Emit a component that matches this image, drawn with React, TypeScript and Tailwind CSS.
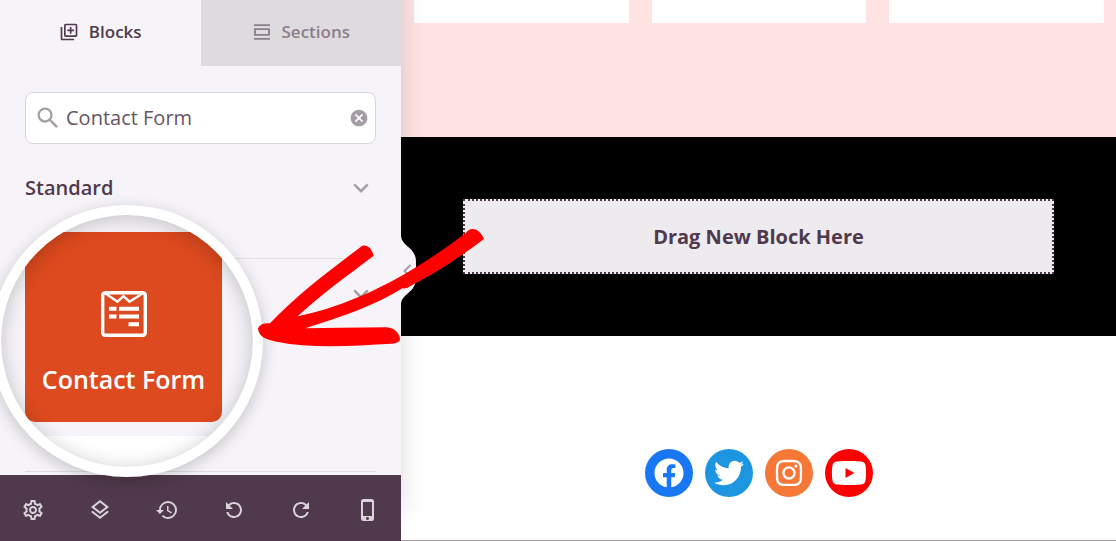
import clsx from "clsx";
import React, { FC, ReactNode, useState } from "react";
import { FaFacebook, FaInstagram, FaTwitter, FaYoutube } from "react-icons/fa";
import {
  MdCancel,
  MdHistory,
  MdOutlineLayers,
  MdOutlineLibraryAdd,
  MdOutlinePhoneIphone,
  MdOutlineSettings,
  MdRefresh,
  MdSearch,
} from "react-icons/md";

const TOOLS = [
  { label: "Settings", icon: <MdOutlineSettings /> },
  { label: "Layers", icon: <MdOutlineLayers /> },
  { label: "History", icon: <MdHistory /> },
  { label: "Undo", icon: <MdRefresh className="-scale-x-100" /> },
  { label: "Redo", icon: <MdRefresh /> },
  { label: "Mobile preview", icon: <MdOutlinePhoneIphone /> },
];

const SOCIALS = [
  { label: "Facebook", color: "bg-[#1877f2]", icon: <FaFacebook className="size-[30px]" /> },
  { label: "Twitter", color: "bg-[#1c96e1]", icon: <FaTwitter className="size-[30px]" /> },
  { label: "Instagram", color: "bg-[#f77737]", icon: <FaInstagram className="size-[30px]" /> },
  { label: "YouTube", color: "bg-[#ff0000]", icon: <FaYoutube className="size-9" /> },
];

interface ITab {
  active: boolean;
  icon: ReactNode;
  label: string;
  onClick: () => void;
}

const Tab: FC<ITab> = ({ active, icon, label, onClick }) => (
  <button
    role="tab"
    aria-selected={active}
    onClick={onClick}
    className={clsx(
      "flex h-[66px] flex-1 items-center justify-center gap-2.5 pb-0.5 text-[17px] font-semibold",
      active ? "text-[#50394c]" : "bg-[#dedbdf] text-[#8b7e8a]"
    )}
  >
    {icon}
    {label}
  </button>
);

const SectionsIcon: FC = () => (
  <svg viewBox="0 0 20 20" className="size-5" fill="none" stroke="currentColor" strokeWidth="1.8">
    <path d="M2 3.2h16M2 16.8h16M2.9 7.2h14.2v5.6H2.9Z" />
  </svg>
);

const Chevron: FC = () => (
  <svg viewBox="0 0 16 10" className="w-4" fill="none" stroke="#a59ca5" strokeWidth="2.4">
    <path d="M1.2 1.4 8 8.2l6.8-6.8" />
  </svg>
);

const FormIcon: FC = () => (
  <svg viewBox="0 0 46 46" className="size-[46px]" fill="none" stroke="white">
    <rect x="1.7" y="1.7" width="42.6" height="42.6" rx="2.5" strokeWidth="3.4" />
    <path d="m4.5 2.5 12 8.2 6-5.6 6 5.6 13-8.2" strokeWidth="2.4" />
    <path
      d="M8 17.8h7.5M18 17.8h20M8 25.5h7.5M18 25.5h20M27.5 33.3H38"
      strokeWidth="4"
    />
  </svg>
);

const Lens: FC = () => (
  <div className="absolute -left-[9px] top-[205px] size-[272px] rounded-full bg-white p-2.5 shadow-[0_4px_16px_rgba(0,0,0,0.2)]">
    <div className="relative flex size-full flex-col overflow-hidden rounded-full bg-[#f6f4f8] pt-[17px]">
      <button className="ml-6 flex h-[190px] w-[197px] flex-col items-center rounded-b-[10px] bg-[#dd4a1f] pt-[59px] text-[25px] font-semibold whitespace-nowrap text-white">
        <FormIcon />
        <span className="mt-6">Contact Form</span>
      </button>
      <div className="mt-3.5 flex-1 bg-white" />
      <div className="pointer-events-none absolute inset-0 rounded-full shadow-[inset_0_3px_20px_rgba(0,0,0,0.22)]" />
    </div>
  </div>
);

const Arrow: FC = () => (
  <svg
    viewBox="0 0 780 420"
    className="pointer-events-none absolute left-[240px] top-[220px] w-[260px]"
    fill="#ff0000"
  >
    <path d="M90 310C170 225 270 150 366 78 380 73 395 84 401 107 325 165 240 225 173 289 350 252 520 160 678 38 690 20 717 22 732 57 620 141 560 172 510 199 503 205 495 206 487 205 410 255 300 292 196 325L300 323 440 322C463 324 478 338 480 358 478 367 470 370 455 371 340 377 220 387 110 365 75 358 56 350 54 325 60 312 75 309 90 310Z" />
  </svg>
);

const Sidebar: FC = () => {
  const [tab, setTab] = useState("Blocks");
  const [query, setQuery] = useState("Contact Form");

  return (
    <aside className="z-10 flex w-[401px] shrink-0 flex-col bg-[#f6f4f8] shadow-[0_-30px_24px_rgba(0,0,0,0.15)]">
      <div role="tablist" className="flex">
        <Tab
          active={tab === "Blocks"}
          icon={<MdOutlineLibraryAdd className="size-5" />}
          label="Blocks"
          onClick={() => setTab("Blocks")}
        />
        <Tab
          active={tab === "Sections"}
          icon={<SectionsIcon />}
          label="Sections"
          onClick={() => setTab("Sections")}
        />
      </div>

      <div className="flex flex-1 flex-col px-[25px] pt-[26px]">
        <div className="flex h-[52px] items-center rounded-lg border border-[#d9d6da] bg-white pr-1.5 pl-2">
          <MdSearch className="size-7 shrink-0 text-[#a59ca5]" />
          <input
            aria-label="Search blocks"
            value={query}
            onChange={(e) => setQuery(e.target.value)}
            className="ml-1 min-w-0 flex-1 bg-transparent text-xl text-[#685566] outline-none"
          />
          <button aria-label="Clear search" onClick={() => setQuery("")}>
            <MdCancel className="size-5 text-[#a59ca5]" />
          </button>
        </div>

        <button className="flex h-[88px] items-center justify-between pr-[7px] text-xl font-semibold text-[#50394c]">
          Standard
          <Chevron />
        </button>

        <div className="mt-[26px] flex-1 border-t border-[#e4e1e5]">
          <button
            aria-label="Expand section"
            className="flex h-[70px] w-full items-center justify-end pr-[7px]"
          >
            <Chevron />
          </button>
        </div>
        <div className="mb-[3px] border-t border-[#dedbdf]" />
      </div>

      <div className="flex h-[66px] items-center justify-between bg-[#50394c] px-[21px] pt-[3px] text-2xl text-[#dad3da]">
        {TOOLS.map((tool) => (
          <button key={tool.label} aria-label={tool.label}>
            {tool.icon}
          </button>
        ))}
      </div>
    </aside>
  );
};

const Canvas: FC = () => (
  <main className="relative flex-1 border-b border-[#a597a2] bg-white">
    <section className="grid h-[137px] grid-cols-3 gap-[23px] bg-[#ffe3e3] pr-3 pl-[13px]">
      <div className="h-[23px] bg-white" />
      <div className="h-[23px] bg-white" />
      <div className="h-[23px] bg-white" />
    </section>

    <section className="bg-black px-[62px] py-[62px]">
      <div className="flex h-[75px] items-center justify-center border-2 border-dotted border-[#50394c] bg-[#edebee] text-xl font-bold text-[#50394c]">
        Drag New Block Here
      </div>
    </section>

    <section className="flex justify-center gap-3 pt-[113px]">
      {SOCIALS.map((item) => (
        <a
          key={item.label}
          href="#"
          aria-label={item.label}
          className={clsx(
            "flex size-12 items-center justify-center rounded-full text-white",
            item.color
          )}
        >
          {item.icon}
        </a>
      ))}
    </section>
  </main>
);

const App: FC = () => (
  <div className="relative flex min-h-screen overflow-hidden font-['Open_Sans',sans-serif]">
    <Sidebar />
    <Canvas />
    {/* collapse handle on the sidebar edge */}
    <button
      aria-label="Collapse sidebar"
      className="absolute left-[401px] top-[236px] z-10"
    >
      <svg viewBox="0 0 15 68" className="w-[15px]" fill="none">
        <path d="M0 0C1 11 15 11 15 26V42C15 57 1 57 0 68Z" fill="#f6f4f8" />
        <path d="m9.5 29-6 6 6 6" stroke="#a59ca5" strokeWidth="2" />
      </svg>
    </button>
    <div className="pointer-events-none absolute inset-0 z-20">
      <Lens />
      <Arrow />
    </div>
  </div>
);

export default App;
